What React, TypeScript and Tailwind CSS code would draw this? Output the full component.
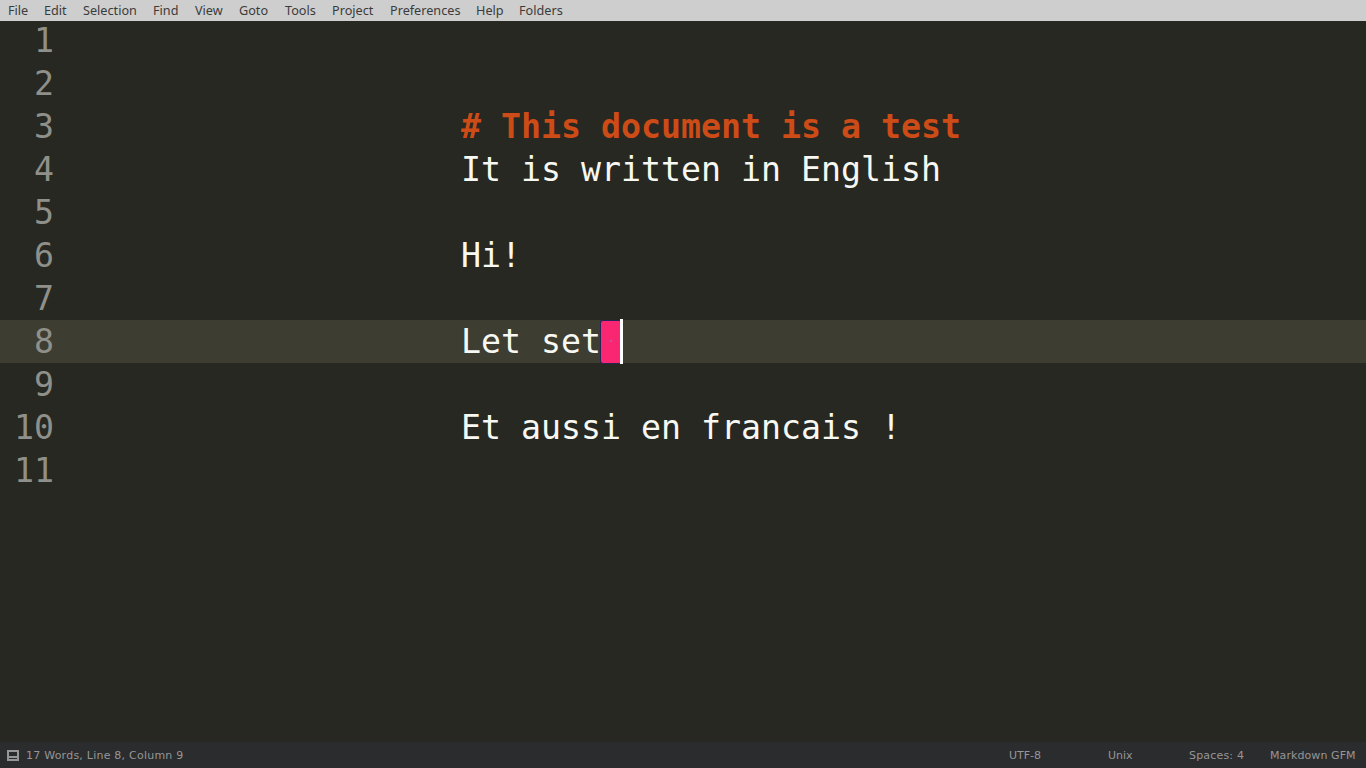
const menus = [
  ["File", "w-9"], ["Edit", "w-[39px]"], ["Selection", "w-[70px]"], ["Find", "w-[42px]"],
  ["View", "w-11"], ["Goto", "w-[46px]"], ["Tools", "w-[47px]"], ["Project", "w-[58px]"],
  ["Preferences", "w-[86px]"], ["Help", "w-[43px]"], ["Folders", "w-14"],
];

const lines = ["", "", "# This document is a test", "It is written in English", "", "Hi!", "", "Let set", "", "Et aussi en francais !", ""];

export default function App() {
  return (
    <div className="flex h-[768px] w-[1366px] flex-col overflow-hidden bg-[#272822]">
      <nav className="flex h-[21px] shrink-0 items-center bg-[#cecece] pl-2 font-['Noto_Sans',sans-serif] text-[12.67px] leading-[21px] text-[#3b3b3b]">
        {menus.map(([label, width]) => (
          <span key={label} className={`${width} shrink-0 whitespace-nowrap`}>{label}</span>
        ))}
      </nav>
      <main className="flex-1 font-['DejaVu_Sans_Mono',monospace] text-[33.22px] leading-[43px]">
        <div className="-mt-0.5">
          {lines.map((line, i) => (
            <div key={i} className={`flex h-[43px] ${i === 7 ? "bg-[#3e3d32]" : ""}`}>
              <span className="w-[54px] shrink-0 text-right text-[#90908a]">{i + 1}</span>
              <span className={`ml-[407px] flex whitespace-pre ${i === 2 ? "font-bold text-[#cc4b16]" : "text-[#f8f8f2]"}`}>
                {line}
                {i === 7 && (
                  <>
                    <span className="relative -ml-px flex h-11 w-5 items-center justify-center rounded-l-[3px] border-y border-l border-[#272557] bg-[#f92672]">
                      <span className="mb-0.5 ml-px size-0.5 bg-[#c653a8]" />
                    </span>
                    <span className="-mt-px h-[45px] w-[3px] bg-white" />
                  </>
                )}
              </span>
            </div>
          ))}
        </div>
      </main>
      <footer className="flex h-[26px] shrink-0 items-center bg-[#2b2c2e] pt-0.5 pl-[7px] font-['DejaVu_Sans',sans-serif] text-[11px] leading-4 whitespace-nowrap text-[#969696]">
        <svg width="12" height="12" viewBox="0 0 12 12" fill="currentColor" shapeRendering="crispEdges"><path fillRule="evenodd" d="M0 0h12v11H0zM2 2v4h8V2zM2 8v1h8V8z" /></svg>
        <span className="ml-[7px] w-[983px] tracking-[0.23px]">17 Words, Line 8, Column 9</span>
        <span className="w-[99px]">UTF-8</span>
        <span className="w-[81px]">Unix</span>
        <span className="w-[81px] tracking-[0.18px]">Spaces: 4</span>
        <span className="tracking-[0.08px]">Markdown GFM</span>
      </footer>
    </div>
  );
}
